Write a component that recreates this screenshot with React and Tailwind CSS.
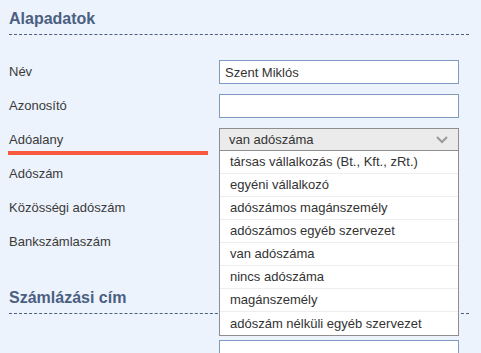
import React from 'react';

const taxOptions = [
  'társas vállalkozás (Bt., Kft., zRt.)',
  'egyéni vállalkozó',
  'adószámos magánszemély',
  'adószámos egyéb szervezet',
  'van adószáma',
  'nincs adószáma',
  'magánszemély',
  'adószám nélküli egyéb szervezet',
];

const SectionTitle = ({ children }) => (
  <h2 className="w-[460px] border-b border-dashed border-[#4b5f82] pt-[9px] pb-[5px] text-[16px] leading-[20px] font-bold text-[#4b5f82]">
    {children}
  </h2>
);

const TextInput = ({ value = '' }) => (
  <input
    type="text"
    defaultValue={value}
    className="h-[24px] w-[240px] border border-[#7f9ac0] bg-white px-[5px] text-[13px] text-[#333] outline-none"
  />
);

const TaxSelect = () => (
  <div className="relative h-[24px] w-[240px]">
    <div className="flex h-[23px] items-center justify-between border border-[#8e8e8e] bg-[#ebebeb] pr-[10px] pl-[9px] text-[13px] text-[#333]">
      <span>van adószáma</span>
      <svg width="12" height="8" viewBox="0 0 12 8" fill="none">
        <polyline points="1,1 6,6 11,1" stroke="#9a9a9a" strokeWidth="2" />
      </svg>
    </div>
    <ul className="absolute top-[23px] left-0 z-10 w-[240px] border-x border-b border-[#8e8e8e] bg-white">
      {taxOptions.map((opt, i) => (
        <li
          key={opt}
          className={`flex h-[23px] items-center pl-[10px] text-[13px] text-[#333] ${
            i < taxOptions.length - 1 ? 'border-b border-[#eeeeee]' : ''
          }`}
        >
          {opt}
        </li>
      ))}
    </ul>
  </div>
);

export default function App() {
  return (
    <div
      className="h-[353px] w-full overflow-hidden bg-[#edf3fc] px-[9px]"
      style={{ fontFamily: '"Liberation Sans", Arial, sans-serif' }}
    >
      <SectionTitle>Alapadatok</SectionTitle>

      <div className="mt-[25px] grid grid-cols-[210px_240px] gap-y-[10px] text-[13px] text-[#3a3a3a]">
        <label className="flex h-[24px] items-center">Név</label>
        <TextInput value="Szent Miklós" />

        <label className="flex h-[24px] items-center">Azonosító</label>
        <TextInput />

        <label className="relative flex h-[24px] items-center">
          Adóalany
          {/* highlight under the label */}
          <span className="absolute top-[23px] -left-px h-[4px] w-[200px] bg-[#f75a3e]" />
        </label>
        <TaxSelect />

        <label className="flex h-[24px] items-center">Adószám</label>
        <TextInput />

        <label className="flex h-[24px] items-center">Közösségi adószám</label>
        <TextInput />

        <label className="flex h-[24px] items-center">Bankszámlaszám</label>
        <TextInput />
      </div>

      <div className="mt-[25px]">
        <SectionTitle>Számlázási cím</SectionTitle>
      </div>

      <div className="mt-[26px] grid grid-cols-[210px_240px]">
        <div />
        <TextInput />
      </div>
    </div>
  );
}
